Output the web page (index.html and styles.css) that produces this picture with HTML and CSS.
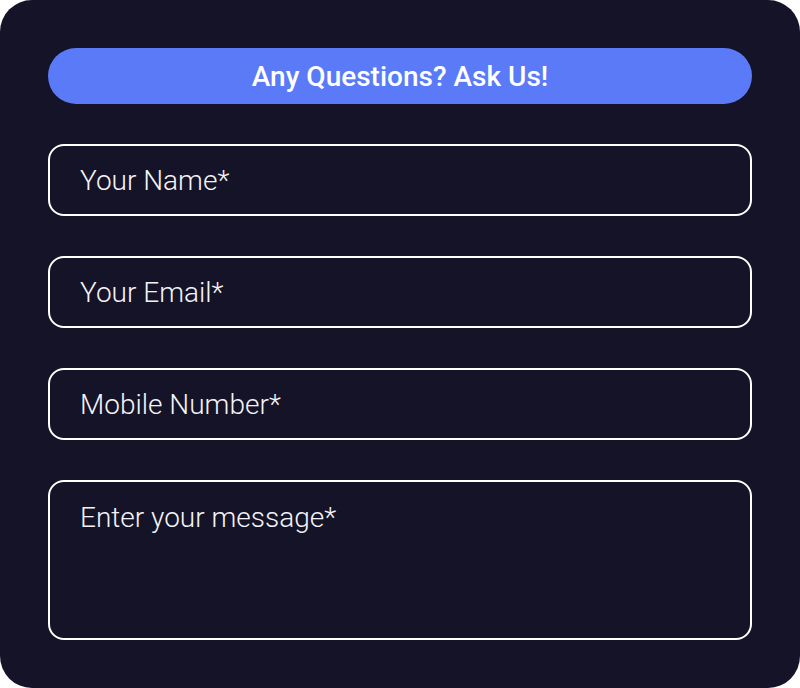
FILE: index.html
```html
<!DOCTYPE html>
<html lang="en">
<head>
    <meta charset="UTF-8">
    <meta name="viewport" content="width=device-width, initial-scale=1.0">
    <title>Contact</title>
    <link rel="stylesheet" href="styles.css">
</head>
<body>
    <div class="card">
        <div class="title">Any Questions? Ask Us!</div>
        <form class="contact-form">
            <input type="text" class="field" placeholder="Your Name*">
            <input type="email" class="field" placeholder="Your Email*">
            <input type="tel" class="field" placeholder="Mobile Number*">
            <textarea class="field message" placeholder="Enter your message*"></textarea>
        </form>
    </div>
</body>
</html>
```

FILE: styles.css
```css
body {
    margin: 0;
    background-color: #ffffff;
    font-family: Roboto, "Noto Sans", Arial, sans-serif;
}

.card {
    width: 800px;
    height: 688px;
    box-sizing: border-box;
    background-color: #151327;
    border-radius: 32px;
    padding: 48px;
}

.title {
    height: 56px;
    border-radius: 28px;
    background-color: #5a7af7;
    color: #ffffff;
    font-size: 28px;
    font-weight: 500;
    display: flex;
    align-items: center;
    justify-content: center;
}

.contact-form {
    display: flex;
    flex-direction: column;
    gap: 40px;
    margin-top: 40px;
}

.field {
    box-sizing: border-box;
    width: 100%;
    height: 72px;
    background: transparent;
    border: 2px solid #ffffff;
    border-radius: 16px;
    padding: 0 30px;
    color: #ffffff;
    font-family: Roboto, "Noto Sans", Arial, sans-serif;
    font-size: 28px;
    font-weight: 300;
    outline: none;
}

.field::placeholder {
    color: #f4f4f8;
    opacity: 1;
}

.message {
    height: 160px;
    padding-top: 19px;
    resize: none;
}
```
